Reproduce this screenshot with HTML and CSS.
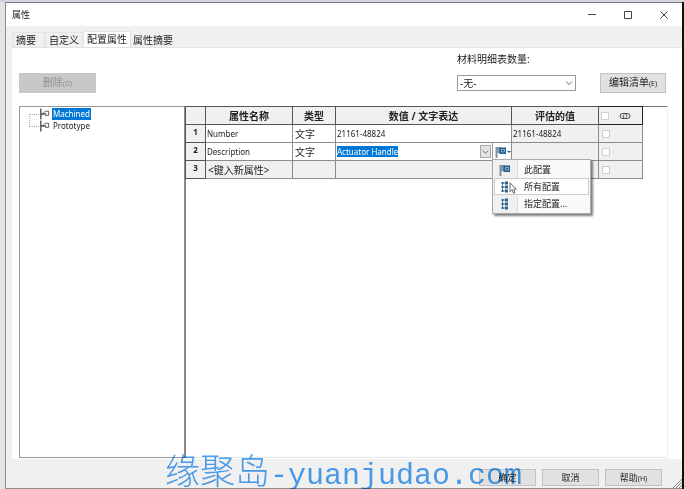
FILE: index.html
```html
<!DOCTYPE html>
<html lang="zh-CN">
<head>
    <meta charset="UTF-8">
    <meta name="viewport" content="width=device-width, initial-scale=1.0">
    <title>属性</title>
    <link rel="stylesheet" href="styles.css">
</head>
<body>
    <svg class="defs" width="0" height="0" aria-hidden="true">
        <symbol id="icon-config" viewBox="0 0 12 12">
            <path d="M2 0v12M2 6h4" fill="none" stroke="#444" stroke-width="1.4"/>
            <path d="M5 4.500l2-1.500h3.500v4.500h-3.500v-2M5 5l3 1" fill="none" stroke="#555" stroke-width="1"/>
        </symbol>
        <symbol id="icon-flag" viewBox="0 0 12 12">
            <path d="M1.500 1v11" stroke="#8a9299" stroke-width="2"/>
            <path d="M2 1h4v6H2z" fill="#7f97aa"/>
            <path d="M4.500 1.500h6.500v6.500H4.500z" fill="#1f5f92"/>
            <path d="M6.500 3.500h3v2.500h-3z" fill="none" stroke="#9cc6e2" stroke-width=".8"/>
        </symbol>
        <symbol id="icon-tree" viewBox="0 0 12 12">
            <path d="M3.500 1v10M3.500 2h3M3.500 6h3M3.500 10h3" fill="none" stroke="#6d8496"/>
            <path d="M2.500 1h2v2h-2zM2.500 5h2v2h-2zM2.500 9h2v2h-2zM6 .5h3v3H6zM6 4.500h3v3H6zM6 8.500h3v3H6z" fill="#2c648f"/>
        </symbol>
    </svg>

    <div class="window">
        <header class="title-bar">
            <h1>属性</h1>
            <button class="win-btn" aria-label="最小化">
                <svg viewBox="0 0 10 10"><path d="M1 4.500h8"/></svg>
            </button>
            <button class="win-btn" aria-label="最大化">
                <svg viewBox="0 0 10 10"><path d="M1.500 1.500h7v7h-7z"/></svg>
            </button>
            <button class="win-btn" aria-label="关闭">
                <svg viewBox="0 0 10 10"><path d="M1.500 1.500l7 7M8.500 1.500l-7 7"/></svg>
            </button>
        </header>

        <nav class="tabs">
            <button class="tab">摘要</button>
            <button class="tab">自定义</button>
            <button class="tab active">配置属性</button>
            <button class="tab">属性摘要</button>
        </nav>

        <main class="panel">
            <div class="toolbar">
                <button class="btn btn-delete" disabled>删除<small>(D)</small></button>
                <div class="bom">
                    <label for="bom-quantity">材料明细表数量:</label>
                    <select id="bom-quantity">
                        <option>-无-</option>
                    </select>
                </div>
                <button class="btn btn-edit">编辑清单<small>(E)</small></button>
            </div>

            <div class="content">
                <ul class="tree">
                    <li><svg><use href="#icon-config"/></svg><span class="selected">Machined</span></li>
                    <li><svg><use href="#icon-config"/></svg><span>Prototype</span></li>
                </ul>

                <div class="grid">
                    <table>
                        <colgroup>
                            <col class="col-num">
                            <col class="col-name">
                            <col class="col-type">
                            <col class="col-value">
                            <col class="col-name">
                            <col class="col-link">
                        </colgroup>
                        <thead>
                            <tr>
                                <th></th>
                                <th>属性名称</th>
                                <th>类型</th>
                                <th>数值 / 文字表达</th>
                                <th>评估的值</th>
                                <th class="link-head">
                                    <div class="link-cell">
                                        <input type="checkbox" aria-label="全部链接">
                                        <svg class="link-icon" viewBox="0 0 12 10"><path d="M5 7.500H3.500a2.500 2.500 0 0 1 0-5H6A2.300 2.300 0 0 1 7 6.500M7 2.500h1.500a2.500 2.500 0 0 1 0 5H6A2.300 2.300 0 0 1 5 3.500"/></svg>
                                    </div>
                                </th>
                            </tr>
                        </thead>
                        <tbody>
                            <tr>
                                <th>1</th>
                                <td class="edit">Number</td>
                                <td class="edit cjk">文字</td>
                                <td class="edit">21161-48824</td>
                                <td>21161-48824</td>
                                <td><div class="link-cell"><input type="checkbox" aria-label="链接 1"></div></td>
                            </tr>
                            <tr>
                                <th>2</th>
                                <td class="edit">Description</td>
                                <td class="edit cjk">文字</td>
                                <td class="edit">
                                    <div class="combo">
                                        <input class="value-input" type="text" value="Actuator Handle" aria-label="数值">
                                        <button class="drop-btn" aria-label="展开">
                                            <svg viewBox="0 0 10 10"><path d="M2 4l3 3 3-3"/></svg>
                                        </button>
                                        <button class="flag-btn" aria-label="选择配置">
                                            <svg class="icon"><use href="#icon-flag"/></svg>
                                            <svg class="caret" viewBox="0 0 4 4"><path d="M0 1h4L2 3z"/></svg>
                                        </button>
                                        <div class="menu" role="menu">
                                            <button role="menuitem"><svg><use href="#icon-flag"/></svg><span>此配置</span></button>
                                            <button role="menuitem" class="hover"><svg><use href="#icon-tree"/></svg><span>所有配置</span></button>
                                            <button role="menuitem"><svg><use href="#icon-tree"/></svg><span>指定配置...</span></button>
                                            <svg class="cursor" viewBox="0 0 8 12"><path d="M1 .8v9l2-2 1.500 3.500 1.500-.7L4.600 7.200H7.300z"/></svg>
                                        </div>
                                    </div>
                                </td>
                                <td></td>
                                <td><div class="link-cell"><input type="checkbox" aria-label="链接 2"></div></td>
                            </tr>
                            <tr>
                                <th>3</th>
                                <td class="cjk">&lt;键入新属性&gt;</td>
                                <td></td>
                                <td></td>
                                <td></td>
                                <td><div class="link-cell"><input type="checkbox" aria-label="链接 3"></div></td>
                            </tr>
                        </tbody>
                    </table>
                </div>
            </div>
        </main>

        <footer class="actions">
            <button class="btn">确定</button>
            <button class="btn">取消</button>
            <button class="btn">帮助<small>(H)</small></button>
        </footer>
        <svg class="grip" viewBox="0 0 9 9"><path d="M0 9l9-9M3 9l6-6M6 9l3-3"/></svg>
    </div>

    <div class="watermark"><span>缘聚岛</span>-yuanjudao.com</div>
</body>
</html>
```
FILE: styles.css
```css
* {
    box-sizing: border-box;
}
body {
    margin: 0;
    height: 100vh;
    padding: 2px 2px 0 5px;
    display: flex;
    position: relative;
    overflow: hidden;
    background: linear-gradient(#d4d4dc 2px, transparent 2px), linear-gradient(to right, #e4e4e7 50%, #111 50%);
    font-family: "Noto Sans", "Noto Sans CJK SC", sans-serif;
    font-size: 10px;
    line-height: 14px;
    color: #222;
}
button, input, select {
    font: inherit;
    color: inherit;
    margin: 0;
    padding: 0;
}
.defs {
    position: absolute;
}
.window {
    flex: 1;
    display: flex;
    flex-direction: column;
    position: relative;
    background: #f0f0f0;
    border: 1px solid #8c8c8c;
    border-top-color: #77777f;
    border-right: none;
}

/* title bar */
.title-bar {
    display: flex;
    align-items: center;
    height: 23px;
    background: #fff;
    padding-left: 6px;
}
.title-bar h1 {
    flex: 1;
    margin: 0;
    font-size: 9px;
    font-weight: 400;
}
.win-btn {
    width: 36px;
    height: 22px;
    border: none;
    background: none;
}
.win-btn svg {
    display: block;
    width: 10px;
    height: 10px;
    margin: 0 auto;
    fill: none;
    stroke: #444;
}

/* tabs */
.tabs {
    display: flex;
    align-items: flex-end;
    height: 21px;
    padding-left: 6px;
}
.tab {
    height: 15px;
    padding: 0 3px;
    line-height: 14px;
    border: 1px solid #e4e4e4;
    border-bottom: none;
    background: #f0f0f0;
}
.tab:first-child {
    padding-right: 8px;
}
.tab.active {
    height: 17px;
    padding: 0 3px 2px;
    background: #fff;
    margin-bottom: -1px;
}
.tab:last-child {
    border-color: transparent;
    padding: 0 1px;
}

/* panel */
.panel {
    flex: 1;
    display: flex;
    flex-direction: column;
    margin-left: 6px;
    padding: 4px 14px 1px 7px;
    background: #fff;
    border-top: 1px solid #e2e2e2;
}
.toolbar {
    display: flex;
    align-items: flex-end;
    margin-bottom: 13px;
}
.btn {
    height: 20px;
    border: 1px solid #c2c2c2;
    background: #e1e1e1;
    line-height: 14px;
}
.btn small {
    font-size: 7px;
}
.btn-delete {
    width: 77px;
    border-color: #c8c8c8;
    background: #c8c8c8;
    color: #929292;
}
.btn-edit {
    width: 66px;
    margin-right: 2px;
}
.bom {
    display: flex;
    flex-direction: column;
    gap: 9px;
    width: 119px;
    margin: 0 24px 2px auto;
}
.bom select {
    appearance: none;
    height: 16px;
    padding-left: 2px;
    border: 1px solid #999;
    border-radius: 0;
    background: #fff url("data:image/svg+xml,%3Csvg xmlns='http://www.w3.org/2000/svg' viewBox='0 0 10 10'%3E%3Cpath d='M2 3.500l3 3 3-3' fill='none' stroke='%23666'/%3E%3C/svg%3E") no-repeat right 1px center / 10px;
}
.content {
    flex: 1;
    display: flex;
}

/* configuration tree */
.tree {
    width: 165px;
    margin: 0;
    padding: 1px 0 0 17px;
    list-style: none;
    border: 1px solid #9a9a9a;
    border-right: none;
    font-size: 8px;
}
.tree li {
    display: flex;
    align-items: center;
    height: 12px;
    margin-left: -8px;
}
.tree li::before {
    content: "";
    width: 9px;
    height: 12px;
    border-left: 1px dotted #aaa;
    border-bottom: 1px dotted #aaa;
    margin-top: 12px;
}
.tree li:first-child::before {
    border-bottom: none;
    border-top: 1px dotted #aaa;
}
.tree li:last-child::before {
    margin-top: -12px;
}
.tree svg {
    width: 11px;
    height: 12px;
    margin-right: 2px;
}
.tree span {
    line-height: 12px;
    padding: 0 1px;
}
.tree .selected {
    background: #0078d7;
    color: #fff;
}

/* property grid */
.grid {
    flex: 1;
    border-left: 2px solid #8a8a8a;
    border-top: 1px solid #777;
    border-right: 1px solid #eee;
    border-bottom: 1px solid #e6e6e6;
}
table {
    table-layout: fixed;
    width: 457px;
    margin-top: -1px;
    margin-left: -1px;
    border-collapse: collapse;
    font-size: 8px;
}
.col-num {
    width: 20px;
}
.col-name {
    width: 87px;
}
.col-type {
    width: 43px;
}
.col-value {
    width: 176px;
}
.col-link {
    width: 44px;
}
th, td {
    height: 18px;
    padding: 0;
    border: 1px solid #8c8c8c;
    background: #f0f0f0;
    line-height: 14px;
    white-space: nowrap;
}
th {
    font-weight: 700;
}
thead th {
    font-size: 10px;
    border-color: #555;
}
tbody th {
    padding-bottom: 3px;
    border-color: #555;
}
td {
    padding-left: 1px;
    text-align: left;
}
td.edit {
    background: #fff;
}
td.cjk {
    font-size: 10px;
    padding-left: 2px;
}
thead .link-head {
    border: 1px solid #222;
}
.link-cell {
    display: flex;
    align-items: center;
    padding-left: 2px;
}
.link-cell input {
    appearance: none;
    width: 8px;
    height: 8px;
    border: 1px solid #d0d0d0;
    background: #fff;
}
.link-icon {
    width: 12px;
    height: 10px;
    margin-left: 10px;
    fill: none;
    stroke: #444;
}

/* value editor */
.combo {
    display: flex;
    align-items: center;
    position: relative;
    height: 17px;
}
.value-input {
    width: 61px;
    height: 11px;
    border: none;
    background: #0078d7;
    color: #fff;
}
.drop-btn {
    width: 11px;
    height: 13px;
    margin-left: auto;
    border: 1px solid #aaa;
    background: #e4e4e4;
}
.drop-btn svg {
    display: block;
    width: 9px;
    height: 9px;
    fill: none;
    stroke: #666;
}
.flag-btn {
    display: flex;
    align-items: center;
    width: 19px;
    height: 17px;
    margin-left: 1px;
    padding-left: 2px;
    border: none;
    border-left: 1px solid #999;
    background: #fff;
}
.flag-btn .icon {
    width: 12px;
    height: 12px;
}
.flag-btn .caret {
    width: 4px;
    height: 4px;
    fill: #1f5f92;
}

/* drop-down menu over the grid */
.menu {
    position: absolute;
    top: 16px;
    left: 155px;
    z-index: 2;
    width: 99px;
    padding: 1px;
    border: 1px solid #aaa;
    background: linear-gradient(to right, #f0f0f0 24px, #dcdcdc 24px, #dcdcdc 25px, #fafafa 25px);
    box-shadow: 2px 2px 2px rgba(0, 0, 0, 0.5);
}
.menu button {
    display: flex;
    align-items: center;
    width: 100%;
    height: 17px;
    border: 1px solid transparent;
    background: none;
    font-size: 9px;
}
.menu button.hover {
    border-color: #ccc;
    background: #fff;
}
.menu button svg {
    width: 12px;
    height: 12px;
    margin: 0 13px 0 4px;
}
.menu .cursor {
    position: absolute;
    top: 22px;
    left: 16px;
    width: 8px;
    height: 12px;
    fill: #fff;
    stroke: #444;
    stroke-width: 0.8;
}

/* dialog buttons */
.actions {
    display: flex;
    justify-content: flex-end;
    gap: 6px;
    padding: 10px 20px 2px 0;
}
.actions .btn {
    width: 57px;
    height: 17px;
    line-height: 13px;
    font-size: 9px;
}
.actions .btn small {
    font-size: 7px;
}
.grip {
    position: absolute;
    right: 0;
    bottom: 0;
    width: 9px;
    height: 9px;
    fill: none;
    stroke: #888;
}
.watermark {
    position: absolute;
    left: 165px;
    bottom: -4px;
    z-index: 3;
    font-family: "Liberation Mono", monospace;
    font-size: 30px;
    line-height: 34px;
    color: #4ba3f5;
    mix-blend-mode: multiply;
    pointer-events: none;
    white-space: nowrap;
}
.watermark span {
    font-family: "Noto Sans CJK SC", sans-serif;
    font-size: 35px;
    font-weight: 300;
}
```
